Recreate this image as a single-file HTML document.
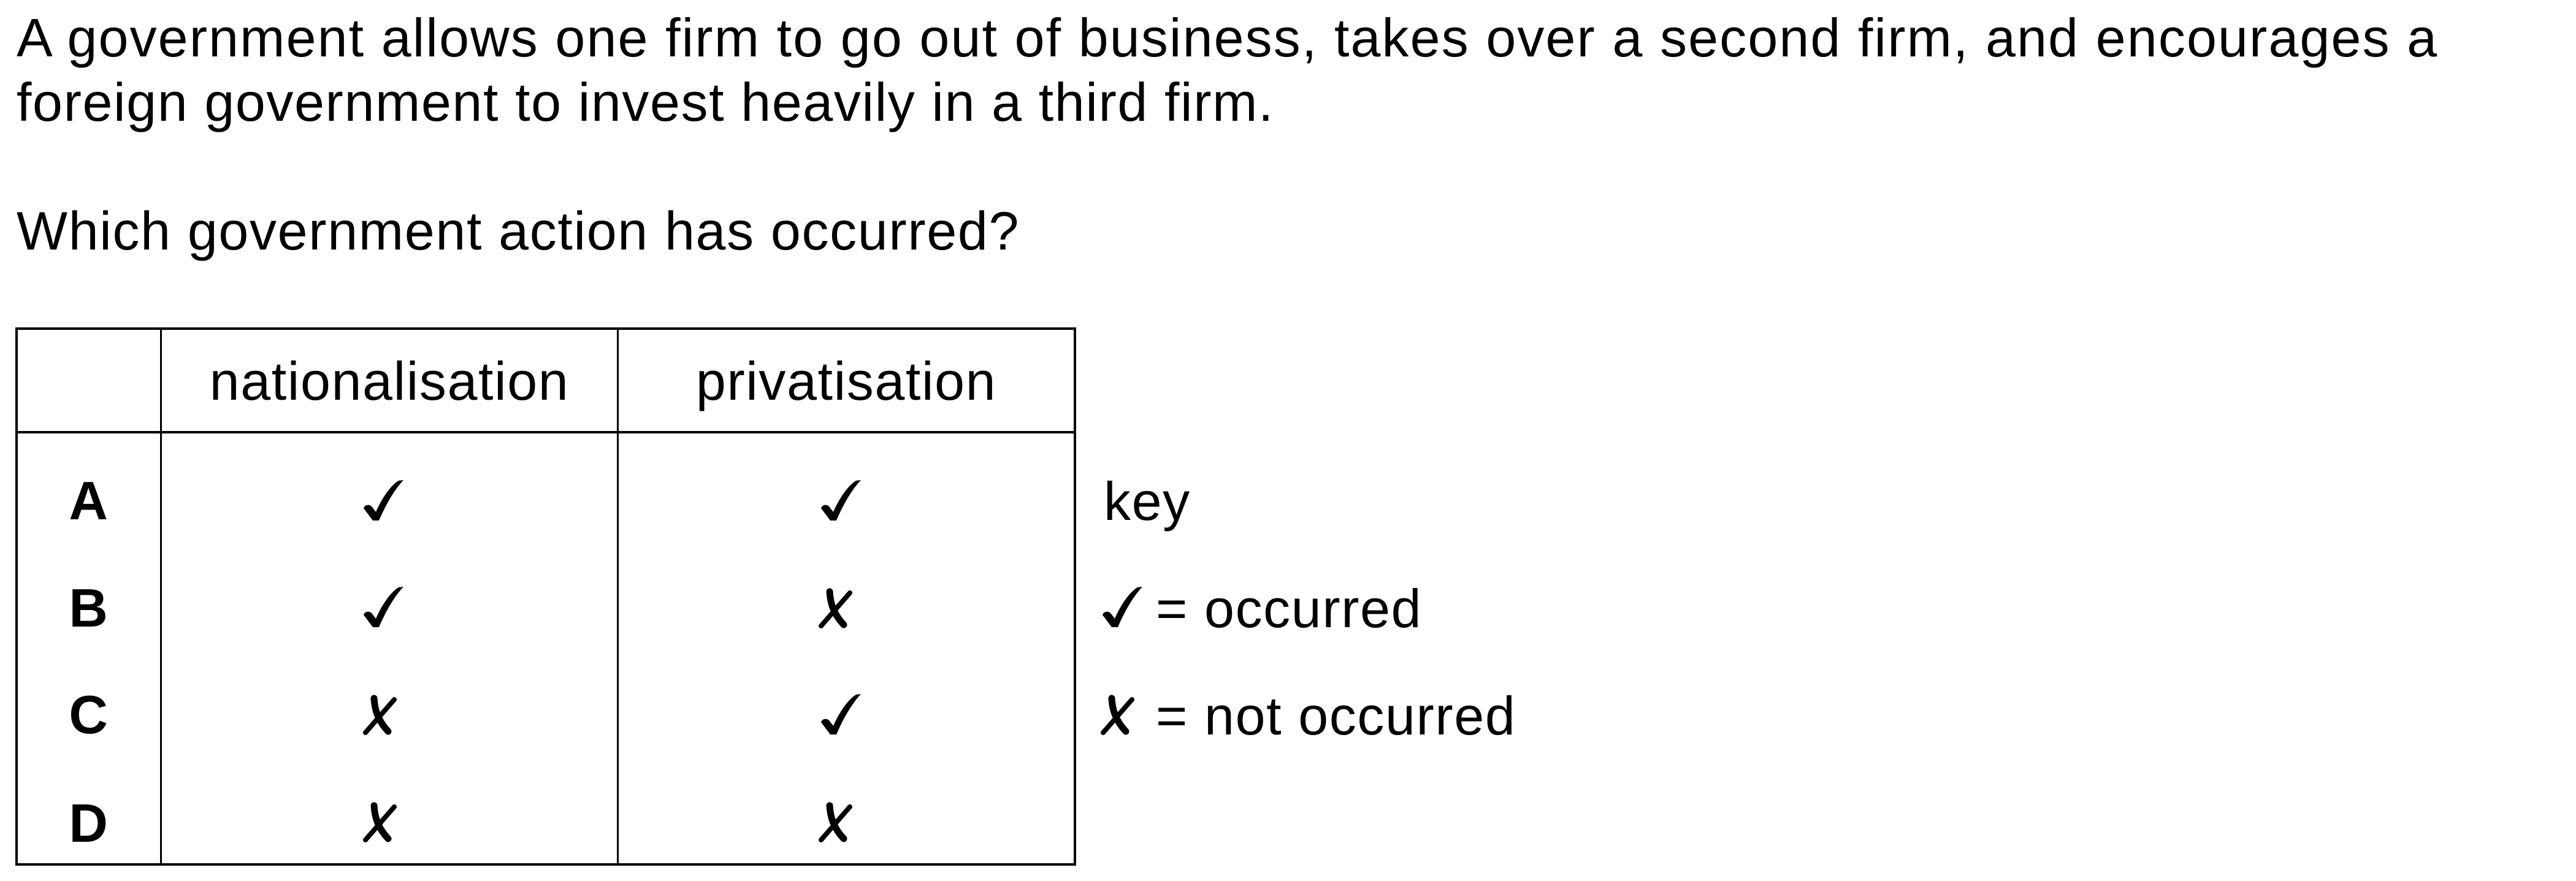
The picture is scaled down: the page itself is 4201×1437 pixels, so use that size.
<!DOCTYPE html>
<html><head><meta charset="utf-8"><style>
html,body{margin:0;padding:0;background:#fff;}
body{width:4201px;height:1437px;position:relative;overflow:hidden;font-family:"Liberation Sans",Arial,sans-serif;color:#000;}
.t{position:absolute;font-size:88px;line-height:88px;white-space:nowrap;letter-spacing:1.6px;}
.b{font-weight:bold;}
.ln{position:absolute;background:#000;}
svg.g{position:absolute;overflow:visible;}
</style></head><body>
<div class="t" style="left:27px;top:18px;letter-spacing:2.1px">A government allows one firm to go out of business, takes over a second firm, and encourages a</div>
<div class="t" style="left:27px;top:123px;letter-spacing:1.6px">foreign government to invest heavily in a third firm.</div>
<div class="t" style="left:27px;top:333px;letter-spacing:1.65px">Which government action has occurred?</div>

<div class="ln" style="left:25px;top:534px;width:1730px;height:4px"></div>
<div class="ln" style="left:25px;top:703px;width:1730px;height:4px"></div>
<div class="ln" style="left:25px;top:1408px;width:1730px;height:4px"></div>
<div class="ln" style="left:25px;top:534px;width:4px;height:878px"></div>
<div class="ln" style="left:261px;top:534px;width:3px;height:878px"></div>
<div class="ln" style="left:1006px;top:534px;width:3px;height:878px"></div>
<div class="ln" style="left:1751px;top:534px;width:4px;height:878px"></div>

<div class="t" style="left:264px;width:742px;text-align:center;top:578px">nationalisation</div>
<div class="t" style="left:1009px;width:742px;text-align:center;top:578px">privatisation</div>

<div class="t b" style="left:29px;width:232px;text-align:center;top:773px">A</div>
<div class="t b" style="left:29px;width:232px;text-align:center;top:948px">B</div>
<div class="t b" style="left:29px;width:232px;text-align:center;top:1122px">C</div>
<div class="t b" style="left:29px;width:232px;text-align:center;top:1299px">D</div>

<svg width="0" height="0" style="position:absolute">
<defs>
<g id="ck"><path d="M0,46 C2,40 9,39 13,43 L20,52 C30,29 44,9 57,1 L65,0 C51,15 37,38 25,66 L15,66 Z" fill="#000"/></g>
<g id="cx"><path d="M17,4 C18,22 23,40 40,58" stroke="#000" stroke-width="11" fill="none" stroke-linecap="round"/><path d="M50,6 L3,60" stroke="#000" stroke-width="8" fill="none" stroke-linecap="round"/></g>
</defs></svg>

<svg class="g" style="left:593px;top:783px" width="66" height="66"><use href="#ck"/></svg>
<svg class="g" style="left:1339px;top:783px" width="66" height="66"><use href="#ck"/></svg>
<svg class="g" style="left:593px;top:957px" width="66" height="66"><use href="#ck"/></svg>
<svg class="g" style="left:1336px;top:961px" width="54" height="64"><use href="#cx"/></svg>
<svg class="g" style="left:593px;top:1135px" width="54" height="64"><use href="#cx"/></svg>
<svg class="g" style="left:1339px;top:1132px" width="66" height="66"><use href="#ck"/></svg>
<svg class="g" style="left:593px;top:1310px" width="54" height="64"><use href="#cx"/></svg>
<svg class="g" style="left:1336px;top:1310px" width="54" height="64"><use href="#cx"/></svg>

<div class="t" style="left:1800px;top:774px">key</div>
<svg class="g" style="left:1798px;top:957px" width="66" height="66"><use href="#ck"/></svg>
<div class="t" style="left:1885px;top:949px">= occurred</div>
<svg class="g" style="left:1796px;top:1135px" width="54" height="64"><use href="#cx"/></svg>
<div class="t" style="left:1885px;top:1124px">= not occurred</div>
</body></html>
